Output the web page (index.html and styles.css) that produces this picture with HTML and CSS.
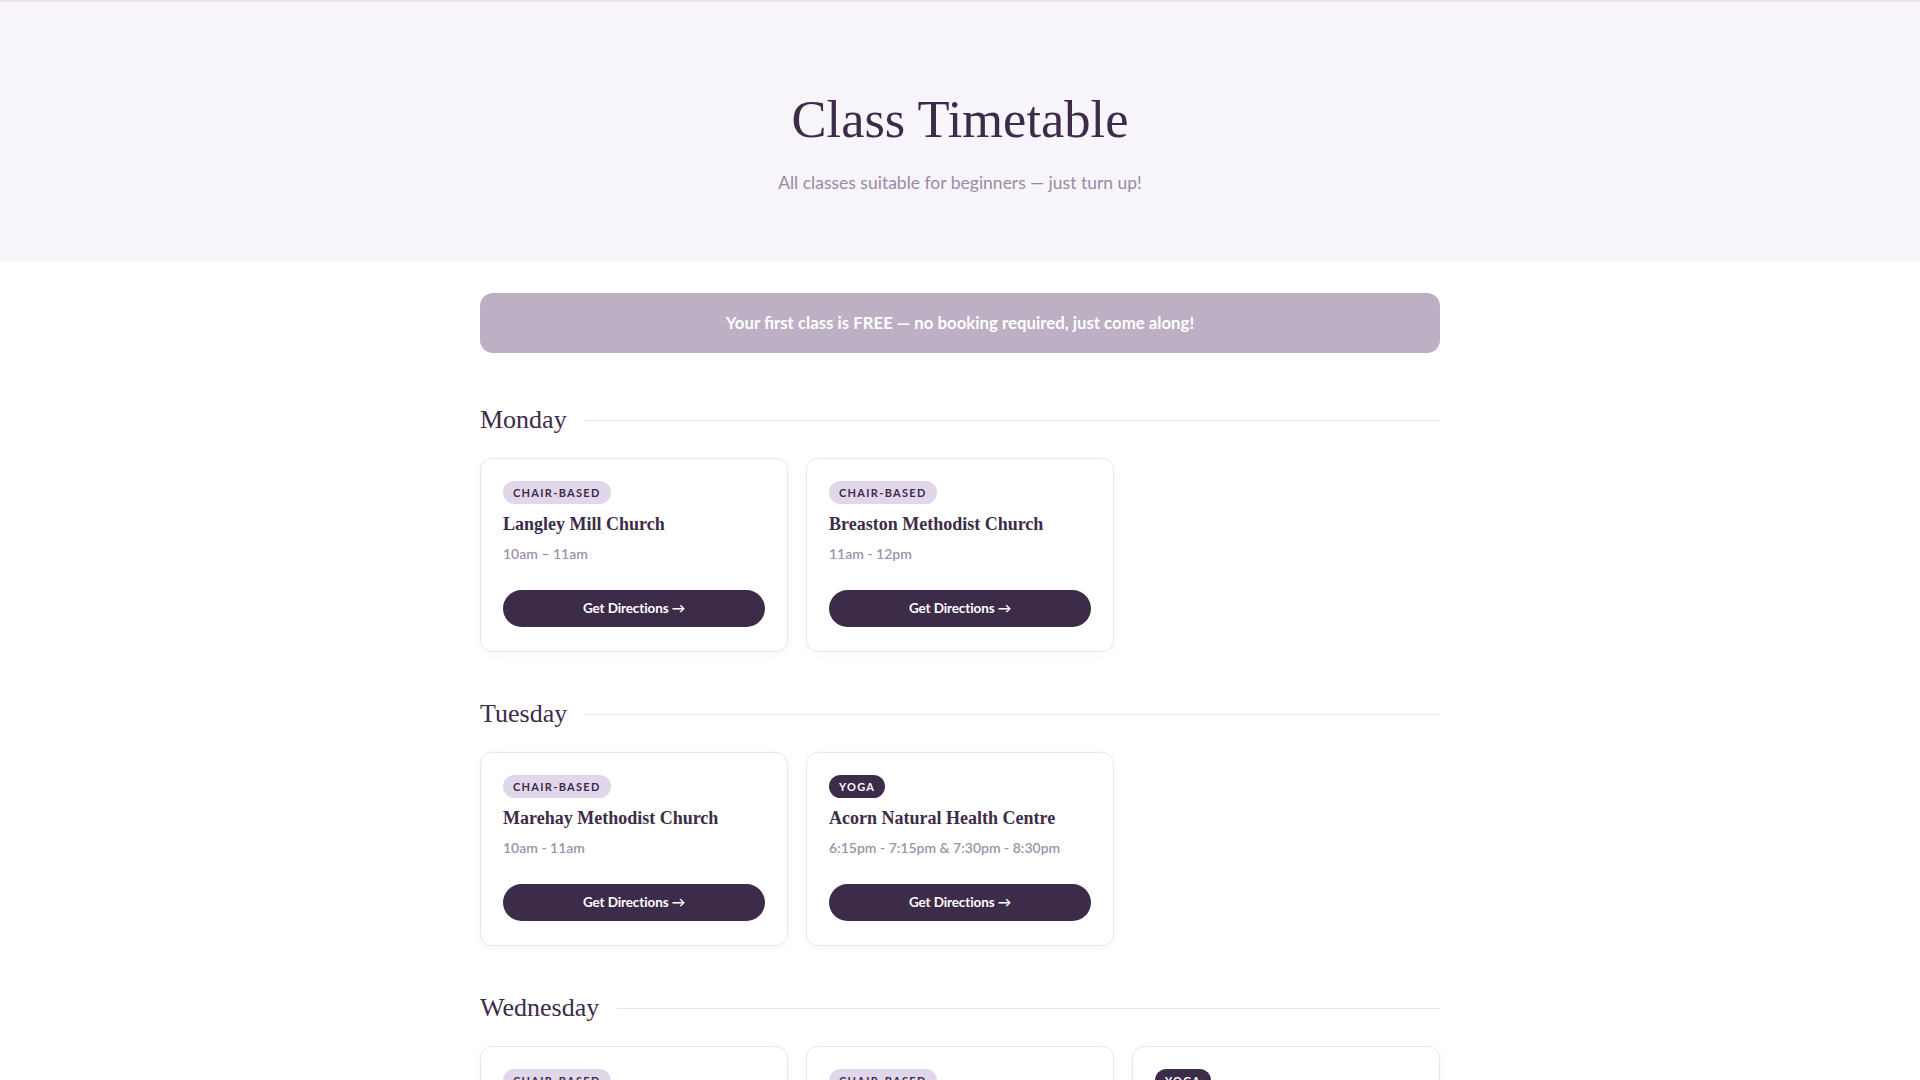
FILE: index.html
```html
<!DOCTYPE html>
<html lang="en">
<head>
<meta charset="utf-8">
<title>Class Timetable</title>
<link rel="stylesheet" href="styles.css">
</head>
<body>
<header class="hero">
  <h1 class="hero-title">Class Timetable</h1>
  <p class="hero-sub">All classes suitable for beginners — just turn up!</p>
</header>
<main class="container">
  <div class="banner">Your first class is FREE — no booking required, just come along!</div>

  <section class="day">
    <div class="day-head"><h2 class="day-name">Monday</h2><span class="day-line"></span></div>
    <div class="grid">
      <article class="card">
        <span class="badge">Chair-based</span>
        <h3 class="venue">Langley Mill Church</h3>
        <p class="time">10am – 11am</p>
        <a class="btn" href="#">Get Directions →</a>
      </article>
      <article class="card">
        <span class="badge">Chair-based</span>
        <h3 class="venue">Breaston Methodist Church</h3>
        <p class="time">11am - 12pm</p>
        <a class="btn" href="#">Get Directions →</a>
      </article>
    </div>
  </section>

  <section class="day">
    <div class="day-head"><h2 class="day-name">Tuesday</h2><span class="day-line"></span></div>
    <div class="grid">
      <article class="card">
        <span class="badge">Chair-based</span>
        <h3 class="venue">Marehay Methodist Church</h3>
        <p class="time">10am - 11am</p>
        <a class="btn" href="#">Get Directions →</a>
      </article>
      <article class="card">
        <span class="badge badge-dark">Yoga</span>
        <h3 class="venue">Acorn Natural Health Centre</h3>
        <p class="time">6:15pm - 7:15pm &amp; 7:30pm - 8:30pm</p>
        <a class="btn" href="#">Get Directions →</a>
      </article>
    </div>
  </section>

  <section class="day">
    <div class="day-head"><h2 class="day-name">Wednesday</h2><span class="day-line"></span></div>
    <div class="grid">
      <article class="card">
        <span class="badge">Chair-based</span>
        <h3 class="venue">Heanor Baptist Church</h3>
        <p class="time">10am - 11am</p>
        <a class="btn" href="#">Get Directions →</a>
      </article>
      <article class="card">
        <span class="badge">Chair-based</span>
        <h3 class="venue">Ripley Community Hall</h3>
        <p class="time">1pm - 2pm</p>
        <a class="btn" href="#">Get Directions →</a>
      </article>
      <article class="card">
        <span class="badge badge-dark">Yoga</span>
        <h3 class="venue">Acorn Natural Health Centre</h3>
        <p class="time">6:15pm - 7:15pm</p>
        <a class="btn" href="#">Get Directions →</a>
      </article>
    </div>
  </section>
</main>
</body>
</html>
```

FILE: styles.css
```css
* { box-sizing: border-box; }

body {
  margin: 0;
  background: #ffffff;
  font-family: Lato, "Noto Sans", sans-serif;
  color: #3d2b4a;
}

.hero {
  background: #f7f5fa;
  border-top: 2px solid #e9e1ec;
  padding: 86px 0 65px;
  text-align: center;
}

.hero-title {
  margin: 0;
  font-family: "Liberation Serif", "DejaVu Serif", serif;
  font-weight: 400;
  font-size: 52.5px;
  line-height: 62px;
  color: #3d2b4a;
}

.hero-sub {
  margin: 20px 0 0;
  font-size: 17.5px;
  line-height: 26px;
  color: #9a8aa6;
}

.container {
  width: 960px;
  margin: 32px auto 0;
}

.banner {
  background: #bdafc4;
  color: #ffffff;
  border-radius: 13px;
  text-align: center;
  font-weight: 700;
  font-size: 16.8px;
  line-height: 26px;
  padding: 17px 20px;
}

.day { margin-top: 44px; }
.day:first-of-type { margin-top: 49px; }

.day-head {
  display: flex;
  align-items: center;
  gap: 18px;
  margin-bottom: 20px;
}

.day-name {
  margin: 0;
  font-family: "Liberation Serif", "DejaVu Serif", serif;
  font-weight: 400;
  font-size: 26px;
  line-height: 36px;
  color: #3d2b4a;
}

.day-line {
  flex: 1;
  height: 1px;
  background: #e8e2ed;
}

.grid {
  display: grid;
  grid-template-columns: repeat(3, 1fr);
  gap: 18px;
}

.card {
  background: #ffffff;
  border: 1px solid #ebe5f0;
  border-radius: 12px;
  padding: 22px 22px 24px;
  box-shadow: 0 2px 10px rgba(61, 43, 74, 0.04);
  display: flex;
  flex-direction: column;
  align-items: flex-start;
}

.badge {
  display: inline-block;
  background: #e1d7eb;
  color: #3d2b4a;
  font-weight: 700;
  font-size: 11px;
  line-height: 15px;
  letter-spacing: 1.3px;
  text-transform: uppercase;
  padding: 4px 10px;
  border-radius: 999px;
}

.badge-dark {
  background: #3d2b4a;
  color: #ffffff;
}

.venue {
  margin: 8px 0 0;
  font-family: "Liberation Serif", "DejaVu Serif", serif;
  font-weight: 700;
  font-size: 18px;
  line-height: 24px;
  color: #3d2b4a;
}

.time {
  margin: 8px 0 0;
  font-size: 14px;
  line-height: 20px;
  font-weight: 600;
  color: #a090ab;
}

.btn {
  display: block;
  width: 100%;
  margin-top: 26px;
  height: 37px;
  line-height: 37px;
  border-radius: 999px;
  background: #3d2b4a;
  color: #ffffff;
  text-align: center;
  text-decoration: none;
  font-weight: 700;
  font-size: 13.5px;
  letter-spacing: -0.1px;
}
```
